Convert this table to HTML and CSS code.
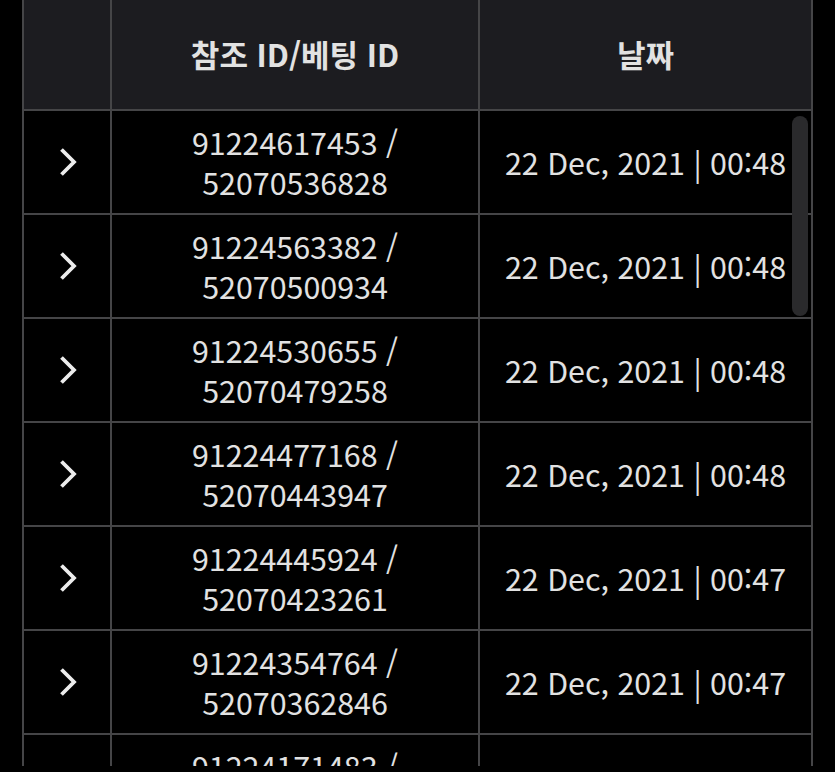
FILE: index.html
```html
<!DOCTYPE html>
<html lang="ko">
<head>
<meta charset="utf-8">
<link rel="stylesheet" href="styles.css">
</head>
<body>
<div class="viewport">
  <table class="bets">
    <colgroup><col class="c1"><col class="c2"><col class="c3"></colgroup>
    <thead>
      <tr><th></th><th>참조 ID/베팅 ID</th><th>날짜</th></tr>
    </thead>
    <tbody>
      <tr><td class="chev"><svg viewBox="0 0 20 30" width="20" height="30"><path d="M4.5 2.5 L17 15 L4.5 27.5"/></svg></td><td>91224617453 /<br>52070536828</td><td>22 Dec, 2021 | 00:48</td></tr>
      <tr><td class="chev"><svg viewBox="0 0 20 30" width="20" height="30"><path d="M4.5 2.5 L17 15 L4.5 27.5"/></svg></td><td>91224563382 /<br>52070500934</td><td>22 Dec, 2021 | 00:48</td></tr>
      <tr><td class="chev"><svg viewBox="0 0 20 30" width="20" height="30"><path d="M4.5 2.5 L17 15 L4.5 27.5"/></svg></td><td>91224530655 /<br>52070479258</td><td>22 Dec, 2021 | 00:48</td></tr>
      <tr><td class="chev"><svg viewBox="0 0 20 30" width="20" height="30"><path d="M4.5 2.5 L17 15 L4.5 27.5"/></svg></td><td>91224477168 /<br>52070443947</td><td>22 Dec, 2021 | 00:48</td></tr>
      <tr><td class="chev"><svg viewBox="0 0 20 30" width="20" height="30"><path d="M4.5 2.5 L17 15 L4.5 27.5"/></svg></td><td>91224445924 /<br>52070423261</td><td>22 Dec, 2021 | 00:47</td></tr>
      <tr><td class="chev"><svg viewBox="0 0 20 30" width="20" height="30"><path d="M4.5 2.5 L17 15 L4.5 27.5"/></svg></td><td>91224354764 /<br>52070362846</td><td>22 Dec, 2021 | 00:47</td></tr>
      <tr><td class="chev"><svg viewBox="0 0 20 30" width="20" height="30"><path d="M4.5 2.5 L17 15 L4.5 27.5"/></svg></td><td>91224171483 /<br>52070245118</td><td>22 Dec, 2021 | 00:46</td></tr>
    </tbody>
  </table>
  <div class="scrollbar"></div>
</div>
</body>
</html>
```
FILE: styles.css
```css
html, body {
  margin: 0;
  padding: 0;
  background: #000;
}
.viewport {
  position: relative;
  height: 766px;
  overflow: hidden;
  padding-left: 22px;
  font-family: "Noto Sans CJK KR", "Noto Sans", sans-serif;
  color: #e2e2e2;
}
.bets {
  border-collapse: collapse;
  table-layout: fixed;
  width: 789px;
  margin-top: -3px;
}
.c1 { width: 88px; }
.c2 { width: 368px; }
.c3 { width: 333px; }
.bets th, .bets td {
  border: 2px solid #454547;
  text-align: center;
  vertical-align: middle;
  padding: 0;
  font-size: 30.4px;
  line-height: 40px;
}
.bets th {
  background: #1c1c20;
  font-weight: 700;
  font-size: 31px;
  height: 110px;
}
.bets td {
  background: #000;
  font-weight: 400;
  height: 102px;
}
.chev svg {
  display: block;
  margin: 0 auto;
  fill: none;
  stroke: #ececec;
  stroke-width: 3.8;
  stroke-linecap: butt;
}
.scrollbar {
  position: absolute;
  left: 792px;
  top: 116px;
  width: 16px;
  height: 200px;
  border-radius: 8px;
  background: #2a2a2c;
}
```
